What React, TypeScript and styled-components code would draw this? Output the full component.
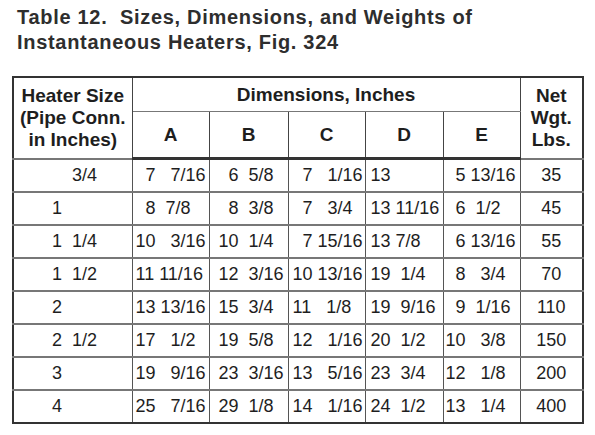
import React from "react";
import styled, { createGlobalStyle } from "styled-components";

const GlobalStyle = createGlobalStyle`
  body {
    margin: 0;
    background: #fff;
    font-family: "Liberation Sans", Arial, sans-serif;
  }
`;

const Page = styled.div`
  width: 595px;
  height: 435px;
  padding: 5px 0 0 12px;
  box-sizing: border-box;
`;

const Title = styled.h1`
  margin: 0 0 21px 5px;
  font-size: 20px;
  line-height: 25px;
  letter-spacing: 0.7px;
  font-weight: bold;
  color: #2e2e2e;
  white-space: pre;
`;

const Table = styled.table`
  border-collapse: collapse;
  table-layout: fixed;
  width: 570px;
  border: 2px solid #333;
  color: #1e1e1e;
  font-size: 18px;
`;

const HeadCell = styled.th<{ $h?: number }>`
  border: 1px solid #777;
  border-left-color: #444;
  border-right-color: #444;
  padding: 0;
  height: ${(p) => p.$h ?? 33}px;
  font-size: 19px;
  font-weight: bold;
  line-height: 22px;
  text-align: center;
  vertical-align: middle;
`;

const HeadRow = styled.tr`
  &:last-child th {
    border-bottom: 3px solid #333;
  }
`;

const Cell = styled.td<{ $pad: number; $center?: boolean }>`
  border: 1px solid #777;
  border-top-width: 2px;
  border-left-color: #555;
  border-right-color: #555;
  height: 31px;
  padding: 0 0 0 ${(p) => p.$pad}px;
  text-align: ${(p) => (p.$center ? "center" : "left")};
  white-space: pre;
  vertical-align: middle;
`;

const widths = [119, 77, 79, 77, 78, 77, 63];
const pads = [38, 3, 9, 4, 5, 2, 0];

const rows: string[][] = [
  ["    3/4", "  7   7/16", "  6  5/8", "  7   1/16", "13", "  5 13/16", "35"],
  ["1", "  8  7/8", "  8  3/8", "  7   3/4", "13 11/16", "  6  1/2", "45"],
  ["1  1/4", "10   3/16", "10  1/4", "  7 15/16", "13 7/8", "  6 13/16", "55"],
  ["1  1/2", "11 11/16", "12  3/16", "10 13/16", "19  1/4", "  8   3/4", "70"],
  ["2", "13 13/16", "15  3/4", "11   1/8", "19  9/16", "  9  1/16", "110"],
  ["2  1/2", "17   1/2", "19  5/8", "12   1/16", "20  1/2", "10   3/8", "150"],
  ["3", "19   9/16", "23  3/16", "13   5/16", "23  3/4", "12   1/8", "200"],
  ["4", "25   7/16", "29  1/8", "14   1/16", "24  1/2", "13   1/4", "400"],
];

export default function App() {
  return (
    <Page>
      <GlobalStyle />
      <Title>
        {"Table 12.  Sizes, Dimensions, and Weights of\nInstantaneous Heaters, Fig. 324"}
      </Title>
      <Table>
        <colgroup>
          {widths.map((w, i) => (
            <col key={i} style={{ width: w }} />
          ))}
        </colgroup>
        <thead>
          <HeadRow>
            <HeadCell rowSpan={2}>
              Heater Size
              <br />
              (Pipe Conn.
              <br />
              in Inches)
            </HeadCell>
            <HeadCell colSpan={5} $h={33}>
              Dimensions, Inches
            </HeadCell>
            <HeadCell rowSpan={2}>
              Net
              <br />
              Wgt.
              <br />
              Lbs.
            </HeadCell>
          </HeadRow>
          <HeadRow>
            {["A", "B", "C", "D", "E"].map((l) => (
              <HeadCell key={l} $h={45}>
                {l}
              </HeadCell>
            ))}
          </HeadRow>
        </thead>
        <tbody>
          {rows.map((r, i) => (
            <tr key={i}>
              {r.map((v, j) => (
                <Cell key={j} $pad={pads[j]} $center={j === 6}>
                  {v}
                </Cell>
              ))}
            </tr>
          ))}
        </tbody>
      </Table>
    </Page>
  );
}
